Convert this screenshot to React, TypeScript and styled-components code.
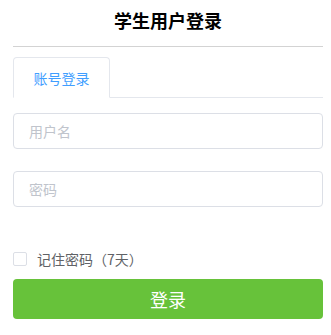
import React from "react";
import styled, { createGlobalStyle } from "styled-components";

const GlobalStyle = createGlobalStyle`
  html, body {
    margin: 0;
    padding: 0;
    background: #fff;
    font-family: "Noto Sans CJK SC", "Noto Sans", sans-serif;
  }
  * { box-sizing: border-box; }
`;

const Page = styled.div`
  width: 331px;
  padding: 0 8px 0 13px;
`;

const Header = styled.div`
  height: 47px;
  border-bottom: 1px solid #d3d3d3;
  display: flex;
  justify-content: center;
  padding-top: 7px;
`;

const Title = styled.h1`
  margin: 0;
  font-size: 18px;
  line-height: 26px;
  font-weight: 700;
  color: #000;
`;

const TabBar = styled.div`
  margin-top: 10px;
  display: flex;
  border-bottom: 1px solid #e4e7ed;
  height: 41px;
`;

const Tab = styled.div<{ $active?: boolean }>`
  width: 97px;
  height: 41px;
  display: flex;
  align-items: center;
  justify-content: center;
  font-size: 14px;
  color: ${(p) => (p.$active ? "#409eff" : "#303133")};
  border: 1px solid #e4e7ed;
  border-bottom-color: ${(p) => (p.$active ? "#fff" : "#e4e7ed")};
  border-radius: 4px 4px 0 0;
  background: #fff;
`;

const Form = styled.form`
  margin-top: 15px;
  display: flex;
  flex-direction: column;
`;

const Field = styled.input<{ $gap?: number }>`
  width: 100%;
  height: 36px;
  margin-bottom: ${(p) => p.$gap ?? 22}px;
  padding: 0 15px;
  border: 1px solid #dcdfe6;
  border-radius: 4px;
  font-family: inherit;
  font-size: 14px;
  color: #606266;
  outline: none;
  &::placeholder {
    color: #c0c4cc;
  }
`;

const RememberRow = styled.label`
  display: flex;
  align-items: center;
  height: 20px;
  margin-bottom: 10px;
  font-size: 14px;
  color: #606266;
  cursor: pointer;
`;

const Box = styled.span`
  width: 14px;
  height: 14px;
  border: 1px solid #dcdfe6;
  border-radius: 2px;
  margin-right: 10px;
  background: #fff;
`;

const Submit = styled.button`
  width: 100%;
  height: 40px;
  border: none;
  border-radius: 4px;
  background: #67c23a;
  color: #fff;
  font-family: inherit;
  font-size: 18px;
  cursor: pointer;
`;

export default function App() {
  return (
    <Page>
      <GlobalStyle />
      <Header>
        <Title>学生用户登录</Title>
      </Header>
      <TabBar>
        <Tab $active>账号登录</Tab>
      </TabBar>
      <Form onSubmit={(e) => e.preventDefault()}>
        <Field placeholder="用户名" />
        <Field type="password" placeholder="密码" $gap={42} />
        <RememberRow>
          <Box />
          记住密码（7天）
        </RememberRow>
        <Submit type="submit">登录</Submit>
      </Form>
    </Page>
  );
}
